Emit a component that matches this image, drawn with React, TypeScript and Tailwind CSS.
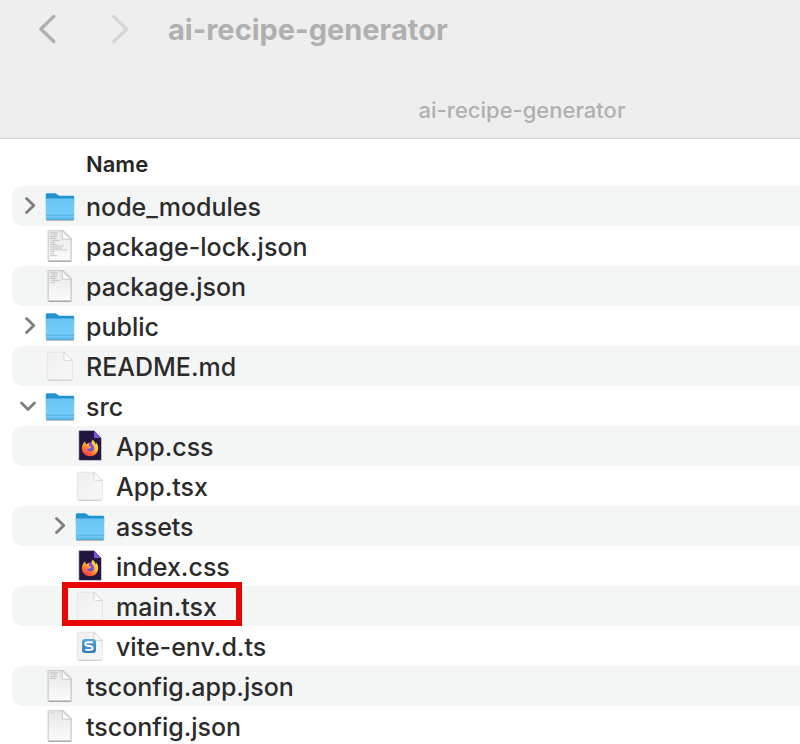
import { useId } from "react";

type Kind = "folder" | "code" | "blank" | "firefox" | "sublime";

interface Entry {
  name: string;
  kind: Kind;
  level: 0 | 1;
  lines?: number;
  open?: boolean;
  marked?: boolean;
}

const entries: Entry[] = [
  { name: "node_modules", kind: "folder", level: 0, open: false },
  { name: "package-lock.json", kind: "code", level: 0, lines: 13 },
  { name: "package.json", kind: "code", level: 0, lines: 6 },
  { name: "public", kind: "folder", level: 0, open: false },
  { name: "README.md", kind: "blank", level: 0 },
  { name: "src", kind: "folder", level: 0, open: true },
  { name: "App.css", kind: "firefox", level: 1 },
  { name: "App.tsx", kind: "blank", level: 1 },
  { name: "assets", kind: "folder", level: 1, open: false },
  { name: "index.css", kind: "firefox", level: 1 },
  { name: "main.tsx", kind: "blank", level: 1, marked: true },
  { name: "vite-env.d.ts", kind: "sublime", level: 1 },
  { name: "tsconfig.app.json", kind: "code", level: 0, lines: 4 },
  { name: "tsconfig.json", kind: "code", level: 0, lines: 1 },
];

const iconClass = "size-8 shrink-0 overflow-visible";

function FolderIcon() {
  const id = useId();
  return (
    <svg viewBox="0 0 32 32" className={iconClass} aria-hidden="true">
      <defs>
        <linearGradient id={id} x1="0" y1="0" x2="0" y2="1">
          <stop offset="0" stopColor="#6ac5f3" />
          <stop offset=".75" stopColor="#74ccf8" />
          <stop offset="1" stopColor="#62bdee" />
        </linearGradient>
      </defs>
      <path d="M2.500 30.300h27" stroke="#000" strokeOpacity=".3" strokeWidth="1" />
      <path d="M1.800 5c0-1.100.6-1.700 1.600-1.700h7.400c.8 0 1.300.2 1.900.8l1.200 1c.6.5 1 .6 1.800.6h12.700c1.200 0 1.800.6 1.800 1.800V12H1.800z" fill="#2193cf" />
      <path d="M1.800 9.600c0-.8.400-1.200 1.200-1.200h26c.8 0 1.200.4 1.200 1.200v18.600c0 1-.5 1.600-1.500 1.600H3.300c-1 0-1.500-.6-1.500-1.600z" fill={`url(#${id})`} />
      <path d="M2 25.200h28" stroke="#4caadd" strokeWidth=".8" />
      <path d="M2 26.600h28" stroke="#72c6f2" strokeWidth=".8" />
      <path d="M2.300 29.300h27.400" stroke="#3f9fd4" strokeWidth=".9" />
    </svg>
  );
}

const codeLines = [8, 5, 7, 6, 8, 5, 7, 14, 12, 17, 5, 4, 7];

function CodeIcon({ lines }: { lines: number }) {
  const id = useId();
  return (
    <svg viewBox="0 0 32 32" className={iconClass} aria-hidden="true">
      <defs>
        <linearGradient id={id} x1="0" y1="0" x2="0" y2="1">
          <stop offset="0" stopColor="#e6e6e6" />
          <stop offset="1" stopColor="#fcfcfc" />
        </linearGradient>
      </defs>
      <path d="M4.400 1h14.700L27 8.800v22.300H4.400z" fill="none" stroke="#000" strokeOpacity=".13" strokeWidth="2" strokeLinejoin="round" />
      <path d="M4.400 31h22.400" stroke="#808080" strokeWidth="1" />
      <path d="M4.400.700h14.700L26.800 8.500v22H4.400z" fill={`url(#${id})`} stroke="#c2c2c2" strokeWidth=".6" />
      {codeLines.slice(0, lines).map((w, i) => (
        <path key={i} d={`M${i < 7 && i % 3 === 1 ? 7.5 : 6} ${2.8 + i * 1.9}h${lines === 1 ? 4 : w}`} stroke={lines === 1 ? "#cfcfcf" : "#bcbcbc"} strokeWidth=".8" />
      ))}
      <path d="M18.300.900v8.300h8.400z" fill="#fff" stroke="#bdbdbd" strokeWidth=".8" strokeLinejoin="round" />
    </svg>
  );
}

function BlankIcon({ sublime = false }: { sublime?: boolean }) {
  const id = useId();
  return (
    <svg viewBox="0 0 32 32" className={iconClass} aria-hidden="true">
      <defs>
        <linearGradient id={`${id}p`} x1="0" y1="0" x2="1" y2="1">
          <stop offset="0" stopColor="#f0f0f0" />
          <stop offset="1" stopColor="#f7f7f7" />
        </linearGradient>
        <linearGradient id={`${id}f`} x1="0" y1="1" x2="1" y2="0">
          <stop offset="0" stopColor="#ffffff" />
          <stop offset=".5" stopColor="#fafafa" />
          <stop offset="1" stopColor="#e4e4e4" />
        </linearGradient>
        <linearGradient id={`${id}s`} x1="0" y1="0" x2="0" y2="1">
          <stop offset="0" stopColor="#58a8df" />
          <stop offset="1" stopColor="#3379b8" />
        </linearGradient>
      </defs>
      <path d="M4.800 2.200h15.400l8.200 8.200v18.200c0 1.100-.5 1.600-1.600 1.600h-22c-1 0-1.500-.5-1.500-1.600V3.800c0-1.100.5-1.600 1.500-1.600z" fill={`url(#${id}p)`} stroke="#dcdcdc" strokeWidth=".7" />
      <path d="M4.300 30.300h23" stroke="#c4c4c4" strokeWidth=".8" />
      <path d="M20 2.300v6.600c0 1 .5 1.500 1.500 1.500h6.800z" fill={`url(#${id}f)`} stroke="#c2c2c2" strokeWidth=".6" strokeLinejoin="round" />
      {sublime && (
        <>
          <rect x="8" y="9" width="14" height="14" rx="3" fill={`url(#${id}s)`} />
          <path d="M18.800 12.200h-5.300c-1.400 0-2.100.5-2.100 1.700s.5 1.600 1.800 1.800l3.600.6c1.300.2 1.800.7 1.800 1.800s-.7 1.800-2 1.800h-5.400" fill="none" stroke="#fff" strokeWidth="1.900" />
        </>
      )}
    </svg>
  );
}

function FirefoxIcon() {
  const id = useId();
  return (
    <svg viewBox="0 0 32 32" className={iconClass} aria-hidden="true">
      <defs>
        <linearGradient id={`${id}a`} x1=".85" y1="0" x2=".2" y2="1">
          <stop offset="0" stopColor="#fff04a" />
          <stop offset=".4" stopColor="#ffc02e" />
          <stop offset=".68" stopColor="#ff7335" />
          <stop offset="1" stopColor="#f0264f" />
        </linearGradient>
        <linearGradient id={`${id}b`} x1="1" y1="0" x2="0" y2="1">
          <stop offset="0" stopColor="#a043e0" />
          <stop offset="1" stopColor="#5a55dd" />
        </linearGradient>
      </defs>
      <path d="M5.200.900h15L27 8v22H5.200z" fill="#22163f" stroke="#3a2c5c" strokeWidth=".6" />
      <path d="M20 .900V8h7z" fill="#8052d8" />
      <circle cx="16.200" cy="17.200" r="4.600" fill={`url(#${id}b)`} />
      <path d="M18.700 9.800c-1.500 1.600-1.500 3.400-.2 4.800 1.500 1.500 2 3 1.400 4.600-.7 1.800-2.300 2.500-4 2.100-1.700-.3-2.800-1.300-2.900-2.600 1 .4 2 .2 2.900-.5.600-.4 1.300-.5 1.400-1.200-.1-.6-1.800-.5-2.400-1.100-.300-.800.100-1.600.9-2.300-1.500-.3-2.700 0-3.500.7-.8-.7-1.200-1.700-1.200-2.800-2.200 1.800-3.300 4.200-3.300 7 0 4.400 3.600 7.700 8.200 7.700s8.200-3.400 8.200-8c0-2.500-.9-4.500-2.500-5.900.1.900 0 1.600-.4 2.200-.3-2.100-1.100-3.600-2.600-4.700z" fill={`url(#${id}a)`} />
    </svg>
  );
}

function EntryIcon({ entry }: { entry: Entry }) {
  switch (entry.kind) {
    case "folder":
      return <FolderIcon />;
    case "code":
      return <CodeIcon lines={entry.lines ?? 1} />;
    case "firefox":
      return <FirefoxIcon />;
    case "sublime":
      return <BlankIcon sublime />;
    default:
      return <BlankIcon />;
  }
}

function Disclosure({ name, open }: { name: string; open: boolean }) {
  return (
    <button type="button" aria-expanded={open} aria-label={`Toggle ${name}`} className="flex size-7 shrink-0 items-center justify-center text-[#7e7e7e]">
      <svg viewBox="0 0 28 28" className="size-7" fill="none" stroke="currentColor" strokeWidth="2.800" strokeLinecap="round" strokeLinejoin="round" aria-hidden="true">
        <path d={open ? "M5.500 11l6.500 6.500 6.500-6.500" : "M10.500 6.500l7.300 7-7.300 7"} />
      </svg>
    </button>
  );
}

function Row({ entry, striped }: { entry: Entry; striped: boolean }) {
  return (
    <tr>
      <td className="p-0 pl-3">
        <div className={`relative flex h-10 items-center rounded-l-[10px] ${striped ? "bg-[#f4f5f5]" : ""} ${entry.level === 1 ? "pl-[34px]" : "pl-1"}`}>
          {entry.open === undefined ? <span className="w-7 shrink-0" /> : <Disclosure name={entry.name} open={entry.open} />}
          <EntryIcon entry={entry} />
          <span className="ml-[10px] whitespace-nowrap pt-0.5 text-[25px] font-medium leading-10 text-[#2b2b2b]">{entry.name}</span>
          {entry.marked && <span className="absolute -top-1 bottom-0 left-[50px] w-[180px] border-[6px] border-[#e90606]" />}
        </div>
      </td>
    </tr>
  );
}

export default function App() {
  return (
    <main className="flex h-screen flex-col overflow-hidden bg-white font-['Inter',sans-serif]">
      <header className="shrink-0 border-b border-[#d6d6d6] bg-[#eeeeee] text-[#b0b0b0]">
        <div className="flex h-[60px] items-center pl-8">
          <button type="button" aria-label="Back" className="flex size-8 items-center justify-center">
            <svg viewBox="0 0 32 32" className="size-8" fill="none" stroke="#b0b0b0" strokeWidth="3.400" strokeLinecap="round" strokeLinejoin="round" aria-hidden="true">
              <path d="M21.800 2.500L8.800 15l13 12.500" />
            </svg>
          </button>
          <button type="button" aria-label="Forward" disabled className="ml-10 flex size-8 items-center justify-center">
            <svg viewBox="0 0 32 32" className="size-8" fill="none" stroke="#d7d7d7" strokeWidth="3.400" strokeLinecap="round" strokeLinejoin="round" aria-hidden="true">
              <path d="M9.700 2.500l13 12.500-13 12.500" />
            </svg>
          </button>
          <h1 className="ml-8 text-[29px] font-bold leading-10">ai-recipe-generator</h1>
        </div>
        <div className="flex h-[78px] items-center justify-center pl-[244px] pt-[22px]">
          <span className="text-[22px] font-medium leading-8">ai-recipe-generator</span>
        </div>
      </header>
      <table className="w-full border-collapse">
        <thead>
          <tr>
            <th scope="col" className="h-[47px] p-0 pb-px pl-[86px] pt-1 text-left text-[22px] font-semibold leading-8 text-[#262626]">
              Name
            </th>
          </tr>
        </thead>
        <tbody>
          {entries.map((entry, i) => (
            <Row key={entry.name} entry={entry} striped={i % 2 === 0} />
          ))}
        </tbody>
      </table>
    </main>
  );
}
